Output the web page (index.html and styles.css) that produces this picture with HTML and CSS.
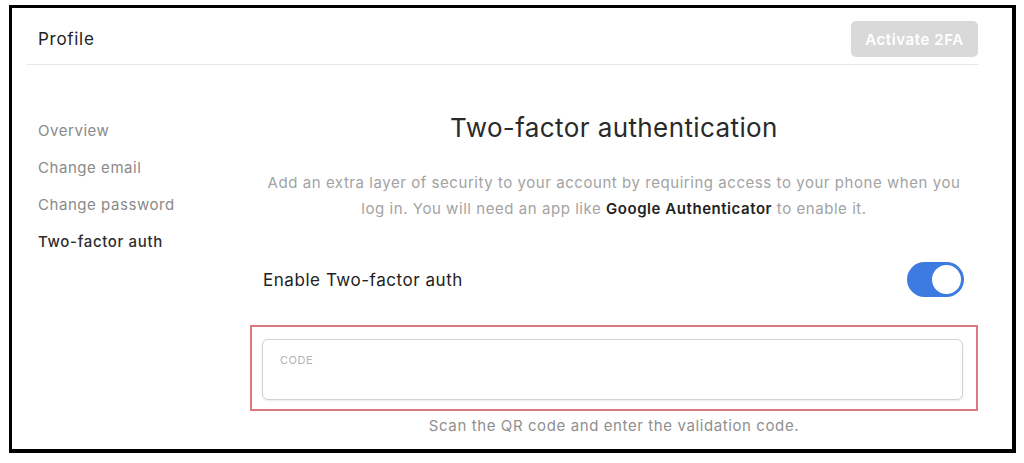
FILE: index.html
```html
<!DOCTYPE html>
<html lang="en">
<head>
<meta charset="utf-8">
<title>Profile – Two-factor authentication</title>
<link rel="stylesheet" href="styles.css">
</head>
<body>
<div class="frame">
  <div class="card">
    <header class="header">
      <h1 class="title">Profile</h1>
      <button class="btn-activate" disabled>Activate 2FA</button>
    </header>
    <div class="body">
      <nav class="sidebar">
        <a class="nav-item">Overview</a>
        <a class="nav-item">Change email</a>
        <a class="nav-item">Change password</a>
        <a class="nav-item active">Two-factor auth</a>
      </nav>
      <main class="main">
        <h2 class="heading">Two-factor authentication</h2>
        <p class="desc">Add an extra layer of security to your account by requiring access to your phone when you log in. You will need an app like <strong>Google Authenticator</strong> to enable it.</p>
        <div class="toggle-row">
          <span class="toggle-label">Enable Two-factor auth</span>
          <span class="toggle"><span class="knob"></span></span>
        </div>
        <div class="highlight">
          <div class="input">
            <span class="input-label">CODE</span>
          </div>
        </div>
        <p class="helper">Scan the QR code and enter the validation code.</p>
      </main>
    </div>
  </div>
</div>
</body>
</html>
```

FILE: styles.css
```css
* { box-sizing: border-box; }
html, body { margin: 0; padding: 0; background: #fff; }
body {
  font-family: "Inter", "Liberation Sans", sans-serif;
  color: #222;
}
.frame {
  margin: 5px 0 0 9px;
  width: 1007px;
  height: 448px;
  border: 3px solid #000;
  border-right-width: 4px;
  border-bottom-width: 4px;
  background: #fff;
  overflow: hidden;
}
.card {
  padding: 0 33px 0 15px;
}
.header {
  display: flex;
  justify-content: space-between;
  align-items: center;
  padding: 13px 1px 7px 11px;
  border-bottom: 1px solid #e8e8e8;
}
.title {
  margin: 0;
  font-size: 17px;
  font-weight: 400;
  color: #222;
  letter-spacing: 0.7px;
}
.btn-activate {
  width: 127px;
  height: 36px;
  border: none;
  border-radius: 5px;
  background: #d9d9d9;
  color: #fff;
  font-family: inherit;
  font-size: 15px;
  font-weight: 600;
  letter-spacing: 0.6px;
}
.body {
  display: flex;
}
.sidebar {
  width: 223px;
  flex: none;
  padding: 47px 0 0 11px;
  display: flex;
  flex-direction: column;
}
.nav-item {
  font-size: 15px;
  line-height: 37px;
  color: #8a8a8a;
  letter-spacing: 0.55px;
}
.nav-item.active {
  color: #2e2e2e;
  font-weight: 500;
  letter-spacing: 0.65px;
}
.main {
  width: 728px;
  flex: none;
  padding-top: 47px;
  text-align: center;
}
.heading {
  margin: 0;
  font-size: 26px;
  line-height: 32px;
  font-weight: 400;
  color: #2a2a2a;
  letter-spacing: 0.4px;
}
.desc {
  margin: 26px 0 0;
  padding: 0 14px;
  font-size: 15px;
  line-height: 26px;
  color: #a3a3a3;
  letter-spacing: 0.55px;
}
.desc strong {
  color: #222;
  font-weight: 600;
}
.toggle-row {
  margin-top: 40px;
  display: flex;
  justify-content: space-between;
  align-items: center;
  padding: 0 14px 0 13px;
  text-align: left;
}
.toggle-label {
  font-size: 17px;
  color: #222;
  letter-spacing: 0.55px;
}
.toggle {
  width: 57px;
  height: 35px;
  border-radius: 18px;
  background: #3d7be0;
  display: flex;
  justify-content: flex-end;
  align-items: center;
  padding: 0 3px;
}
.knob {
  width: 29px;
  height: 29px;
  border-radius: 50%;
  background: #fff;
}
.highlight {
  margin-top: 28px;
  border: 2px solid #dc7980;
  padding: 12px 13px 9px 10px;
}
.input {
  height: 61px;
  border: 1px solid #d2d2d2;
  border-radius: 6px;
  box-shadow: 0 1px 2px rgba(0, 0, 0, 0.08);
  background: #fff;
  text-align: left;
  padding: 8px 0 0 17px;
}
.input-label {
  font-size: 11px;
  color: #b3b3b3;
  letter-spacing: 0.5px;
}
.helper {
  margin: 5px 0 0;
  font-size: 15px;
  line-height: 20px;
  color: #8f8f8f;
  letter-spacing: 0.6px;
}
```
